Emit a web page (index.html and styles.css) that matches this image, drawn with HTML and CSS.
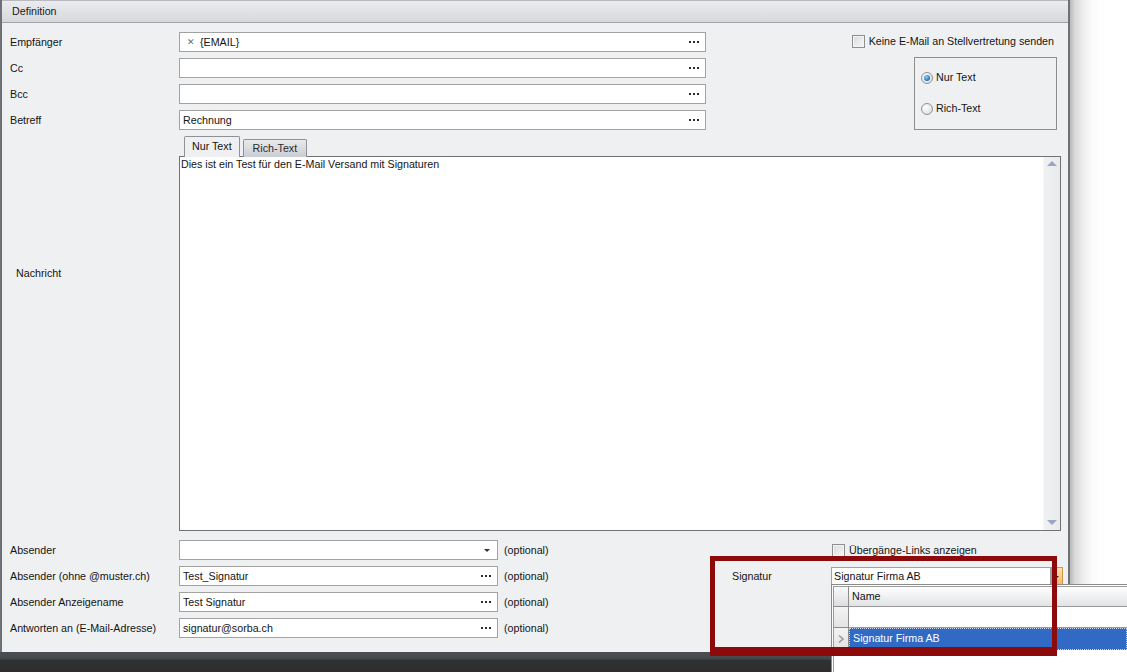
FILE: index.html
```html
<!DOCTYPE html>
<html lang="de">
<head>
<meta charset="utf-8">
<title>Definition</title>
<link rel="stylesheet" href="styles.css">
</head>
<body>
<div class="app">
  <div class="main">
    <div class="panel">
      <div class="panel-head">Definition</div>
      <div class="panel-body">
        <div class="top">
          <div class="fields">
            <div class="row"><span class="lbl">Empfänger</span><div class="input wide"><span class="tok"><span class="x">✕</span>{EMAIL}</span><span class="dots"><i></i><i></i><i></i></span></div></div>
            <div class="row"><span class="lbl">Cc</span><div class="input wide"><span></span><span class="dots"><i></i><i></i><i></i></span></div></div>
            <div class="row"><span class="lbl">Bcc</span><div class="input wide"><span></span><span class="dots"><i></i><i></i><i></i></span></div></div>
            <div class="row"><span class="lbl">Betreff</span><div class="input wide"><span>Rechnung</span><span class="dots"><i></i><i></i><i></i></span></div></div>
          </div>
          <div class="right">
            <label class="check"><span class="box"></span>Keine E-Mail an Stellvertretung senden</label>
            <div class="group">
              <div class="radio"><span class="dot on"></span>Nur Text</div>
              <div class="radio"><span class="dot"></span>Rich-Text</div>
            </div>
          </div>
        </div>

        <div class="msg">
          <div class="msg-lbl">Nachricht</div>
          <div class="editor">
            <div class="tabs">
              <span class="tab active">Nur Text</span>
              <span class="tab">Rich-Text</span>
            </div>
            <div class="textbox">
              <div class="text">Dies ist ein Test für den E-Mail Versand mit Signaturen</div>
              <div class="scroll"><span class="arrow up"></span><span class="arrow down"></span></div>
            </div>
          </div>
        </div>

        <div class="bottom">
          <div class="fields bfields">
            <div class="row"><span class="lbl">Absender</span><div class="input narrow"><span></span><span class="caret"></span></div><span class="opt">(optional)</span></div>
            <div class="row"><span class="lbl">Absender (ohne @muster.ch)</span><div class="input narrow"><span>Test_Signatur</span><span class="dots"><i></i><i></i><i></i></span></div><span class="opt">(optional)</span></div>
            <div class="row"><span class="lbl">Absender Anzeigename</span><div class="input narrow"><span>Test Signatur</span><span class="dots"><i></i><i></i><i></i></span></div><span class="opt">(optional)</span></div>
            <div class="row"><span class="lbl">Antworten an (E-Mail-Adresse)</span><div class="input narrow"><span>signatur@sorba.ch</span><span class="dots"><i></i><i></i><i></i></span></div><span class="opt">(optional)</span></div>
          </div>
          <div class="sigcol">
            <label class="check links"><span class="box"></span>Übergänge-Links anzeigen</label>
            <div class="sigrow">
              <span class="siglbl">Signatur</span>
              <div class="input sig"><span>Signatur Firma AB</span></div>
              <span class="ddbtn"></span>
            </div>
          </div>
        </div>
      </div>
    </div>
    <div class="shadow"></div>
  </div>
  <div class="statusbar"></div>

  <div class="popup">
    <div class="grid">
      <div class="grow head"><span class="ind"></span><span class="cell">Name</span></div>
      <div class="grow"><span class="ind"></span><span class="cell"></span></div>
      <div class="grow sel"><span class="ind"><svg width="8" height="10" viewBox="0 0 8 10"><path d="M2 1.5 L6 5 L2 8.5" fill="none" stroke="#9a9a9a" stroke-width="1.6"/></svg></span><span class="cell">Signatur Firma AB</span></div>
      <div class="grow rest"><span class="ind blank"></span><span class="cell"></span></div>
    </div>
  </div>
  <div class="highlight"></div>
</div>
</body>
</html>
```

FILE: styles.css
```css
* { box-sizing: border-box; }
html, body { margin: 0; padding: 0; }
body {
  width: 1127px;
  height: 672px;
  overflow: hidden;
  background: #ffffff;
  font: 10.7px/13px "Liberation Sans", Arial, sans-serif;
  color: #141414;
}
.app {
  position: relative;
  width: 1127px;
  height: 672px;
  display: flex;
  flex-direction: column;
}
.main {
  display: flex;
  height: 652px;
}
.panel {
  width: 1070px;
  height: 652px;
  background: #eff0f2;
  border-left: 2px solid #6d7075;
  border-right: 2px solid #6d7075;
  display: flex;
  flex-direction: column;
}
.panel-head {
  height: 23px;
  padding: 4px 0 0 10px;
  background: linear-gradient(#ebecef, #d6d8dc);
  border-top: 1px solid #b8babe;
  border-bottom: 1px solid #9fa2a7;
  color: #1a1a1a;
}
.panel-body {
  flex: 1;
  padding: 9px 7px 0 8px;
  display: flex;
  flex-direction: column;
}
.shadow {
  flex: 1;
  background: linear-gradient(to right, #b9b9b9 0, #d9d9d9 5px, #efefef 14px, #fafafa 22px, #ffffff 30px);
}
.statusbar {
  height: 20px;
  background: linear-gradient(#4a4d52 0, #45484d 7px, #303132 8px, #2d2d2e 100%);
}

/* form rows */
.top { display: flex; justify-content: space-between; }
.fields { display: flex; flex-direction: column; }
.row {
  display: flex;
  align-items: center;
  height: 20px;
  margin-bottom: 6px;
}
.lbl { width: 169px; flex: none; }
.input {
  height: 20px;
  background: #fff;
  border: 1px solid #a2a2a2;
  display: flex;
  align-items: center;
  justify-content: space-between;
  padding: 0 4px 0 3px;
  flex: none;
}
.input.wide { width: 527px; }
.input.narrow { width: 319px; }
.tok { display: flex; align-items: center; }
.tok .x { color: #6b6b6b; font-size: 9px; margin: 0 5px 0 4px; }
.dots { display: flex; gap: 2px; margin-right: 2px; }
.dots i { width: 2px; height: 2px; background: #2a2a2a; display: block; }
.caret {
  width: 0; height: 0;
  border-left: 3px solid transparent;
  border-right: 3px solid transparent;
  border-top: 3px solid #333;
  margin-right: 3px;
}
.opt { margin-left: 6px; }

/* right column */
.right {
  display: flex;
  flex-direction: column;
  align-items: flex-end;
  margin-right: 4px;
}
.check { display: flex; align-items: center; }
.box {
  width: 13px; height: 13px;
  border: 1px solid #8e8f8f;
  background: linear-gradient(135deg, #dcdcdc, #f6f6f6);
  box-shadow: inset 0 0 0 1px #f4f4f4;
  margin-right: 4px;
  flex: none;
}
.top .check { margin-top: 3px; margin-right: 3px; }
.group {
  margin-top: 9px;
  width: 143px;
  height: 73px;
  border: 1px solid #8d8d8d;
  padding: 13px 0 0 6px;
}
.radio { display: flex; align-items: center; height: 13px; margin-bottom: 18px; }
.dot {
  width: 12px; height: 12px;
  border-radius: 50%;
  border: 1px solid #8f9297;
  background: radial-gradient(circle at 40% 35%, #ffffff, #d5d7da);
  margin-right: 3px;
  position: relative;
  flex: none;
}
.dot.on::after {
  content: "";
  position: absolute;
  left: 2px; top: 2px;
  width: 6px; height: 6px;
  border-radius: 50%;
  background: radial-gradient(circle at 40% 35%, #8fd0f5, #1f6fb5 70%);
}

/* message */
.msg { display: flex; margin-top: 0; }
.msg-lbl { width: 169px; padding: 131px 0 0 6px; flex: none; }
.editor { display: flex; flex-direction: column; }
.tabs { display: flex; align-items: flex-end; padding-left: 5px; height: 20px; position: relative; z-index: 1; }
.tab {
  border: 1px solid #8f9196;
  border-bottom: none;
  padding: 0 9px;
  height: 18px;
  line-height: 16px;
  background: linear-gradient(#e9eaec, #c9ccd1);
  color: #2b2b2b;
  margin-left: 3px;
  margin-bottom: -1px;
  border-radius: 2px 2px 0 0;
}
.tab.active {
  height: 21px;
  line-height: 19px;
  margin-left: 0;
  background: #eff0f2;
  color: #141414;
  padding: 0 7px;
}
.textbox {
  width: 882px;
  height: 375px;
  border: 1px solid #727272;
  background: #fff;
  display: flex;
  justify-content: space-between;
}
.text { padding: 1px 1px; }
.scroll {
  width: 17px;
  background: linear-gradient(to right, #f0f1f3, #e9eaec);
  border-left: 1px solid #f7f7f7;
  display: flex;
  flex-direction: column;
  justify-content: space-between;
  align-items: center;
  padding: 4px 0 5px;
}
.arrow { width: 0; height: 0; border-left: 5px solid transparent; border-right: 5px solid transparent; }
.arrow.up { border-bottom: 5px solid #9ba6c6; }
.arrow.down { border-top: 5px solid #9ba6c6; }

/* bottom */
.bottom { display: flex; margin-top: 9px; }
.bfields { width: 550px; flex: none; }
.sigcol { margin-left: 172px; display: flex; flex-direction: column; }
.links { padding-left: 100px; height: 20px; }
.sigrow { display: flex; align-items: center; margin-top: 7px; height: 19px; }
.siglbl { width: 99px; flex: none; }
.input.sig { width: 220px; height: 19px; padding-left: 2px; }
.ddbtn {
  width: 12px; height: 19px;
  border: 1px solid #c99a4a;
  background: linear-gradient(#fde3b0, #f9b564);
  position: relative;
}
.ddbtn::after {
  content: "";
  position: absolute;
  left: 3px; top: 8px;
  border-left: 2px solid transparent;
  border-right: 2px solid transparent;
  border-top: 2px solid #222;
}

/* dropdown popup */
.popup {
  position: absolute;
  left: 831px;
  top: 584px;
  width: 296px;
  height: 88px;
  background: #fff;
  border-left: 1px solid #8a8a8a;
  border-top: 1px solid #8a8a8a;
  padding: 1px 0 0 1px;
}
.grid { display: flex; flex-direction: column; height: 100%; border-left: 1px solid #9a9a9a; }
.grow { display: flex; height: 21px; }
.grow .ind {
  width: 15px;
  flex: none;
  background: linear-gradient(#f3f3f3, #e4e4e4);
  border-right: 1px solid #8c8c8c;
  border-bottom: 1px solid #8c8c8c;
  display: flex; align-items: center; justify-content: center;
}
.grow .cell { flex: 1; padding: 4px 0 0 3px; border-bottom: 1px solid #9a9a9a; }
.grow.head { height: 21px; border-top: 1px solid #9a9a9a; }
.grow.head .cell { background: linear-gradient(#ffffff, #e1e2e5); color: #111; padding-top: 3px; }
.grow.head .ind { background: linear-gradient(#fafafa, #dcdde0); }
.grow.sel { height: 22px; }
.grow.sel .cell { background: #316ac5; color: #fff; border: 1px dotted #c8d4ea; padding-top: 3px; }
.grow.rest { flex: 1; }
.grow.rest .ind.blank { background: #fff; border-bottom: none; border-right: none; }
.grow.rest .cell { border-bottom: none; }

/* highlight box */
.highlight {
  position: absolute;
  left: 710px;
  top: 556px;
  width: 347px;
  height: 100px;
  border: 5px solid #8c0a0a;
  border-bottom-width: 9px;
  pointer-events: none;
}
```
